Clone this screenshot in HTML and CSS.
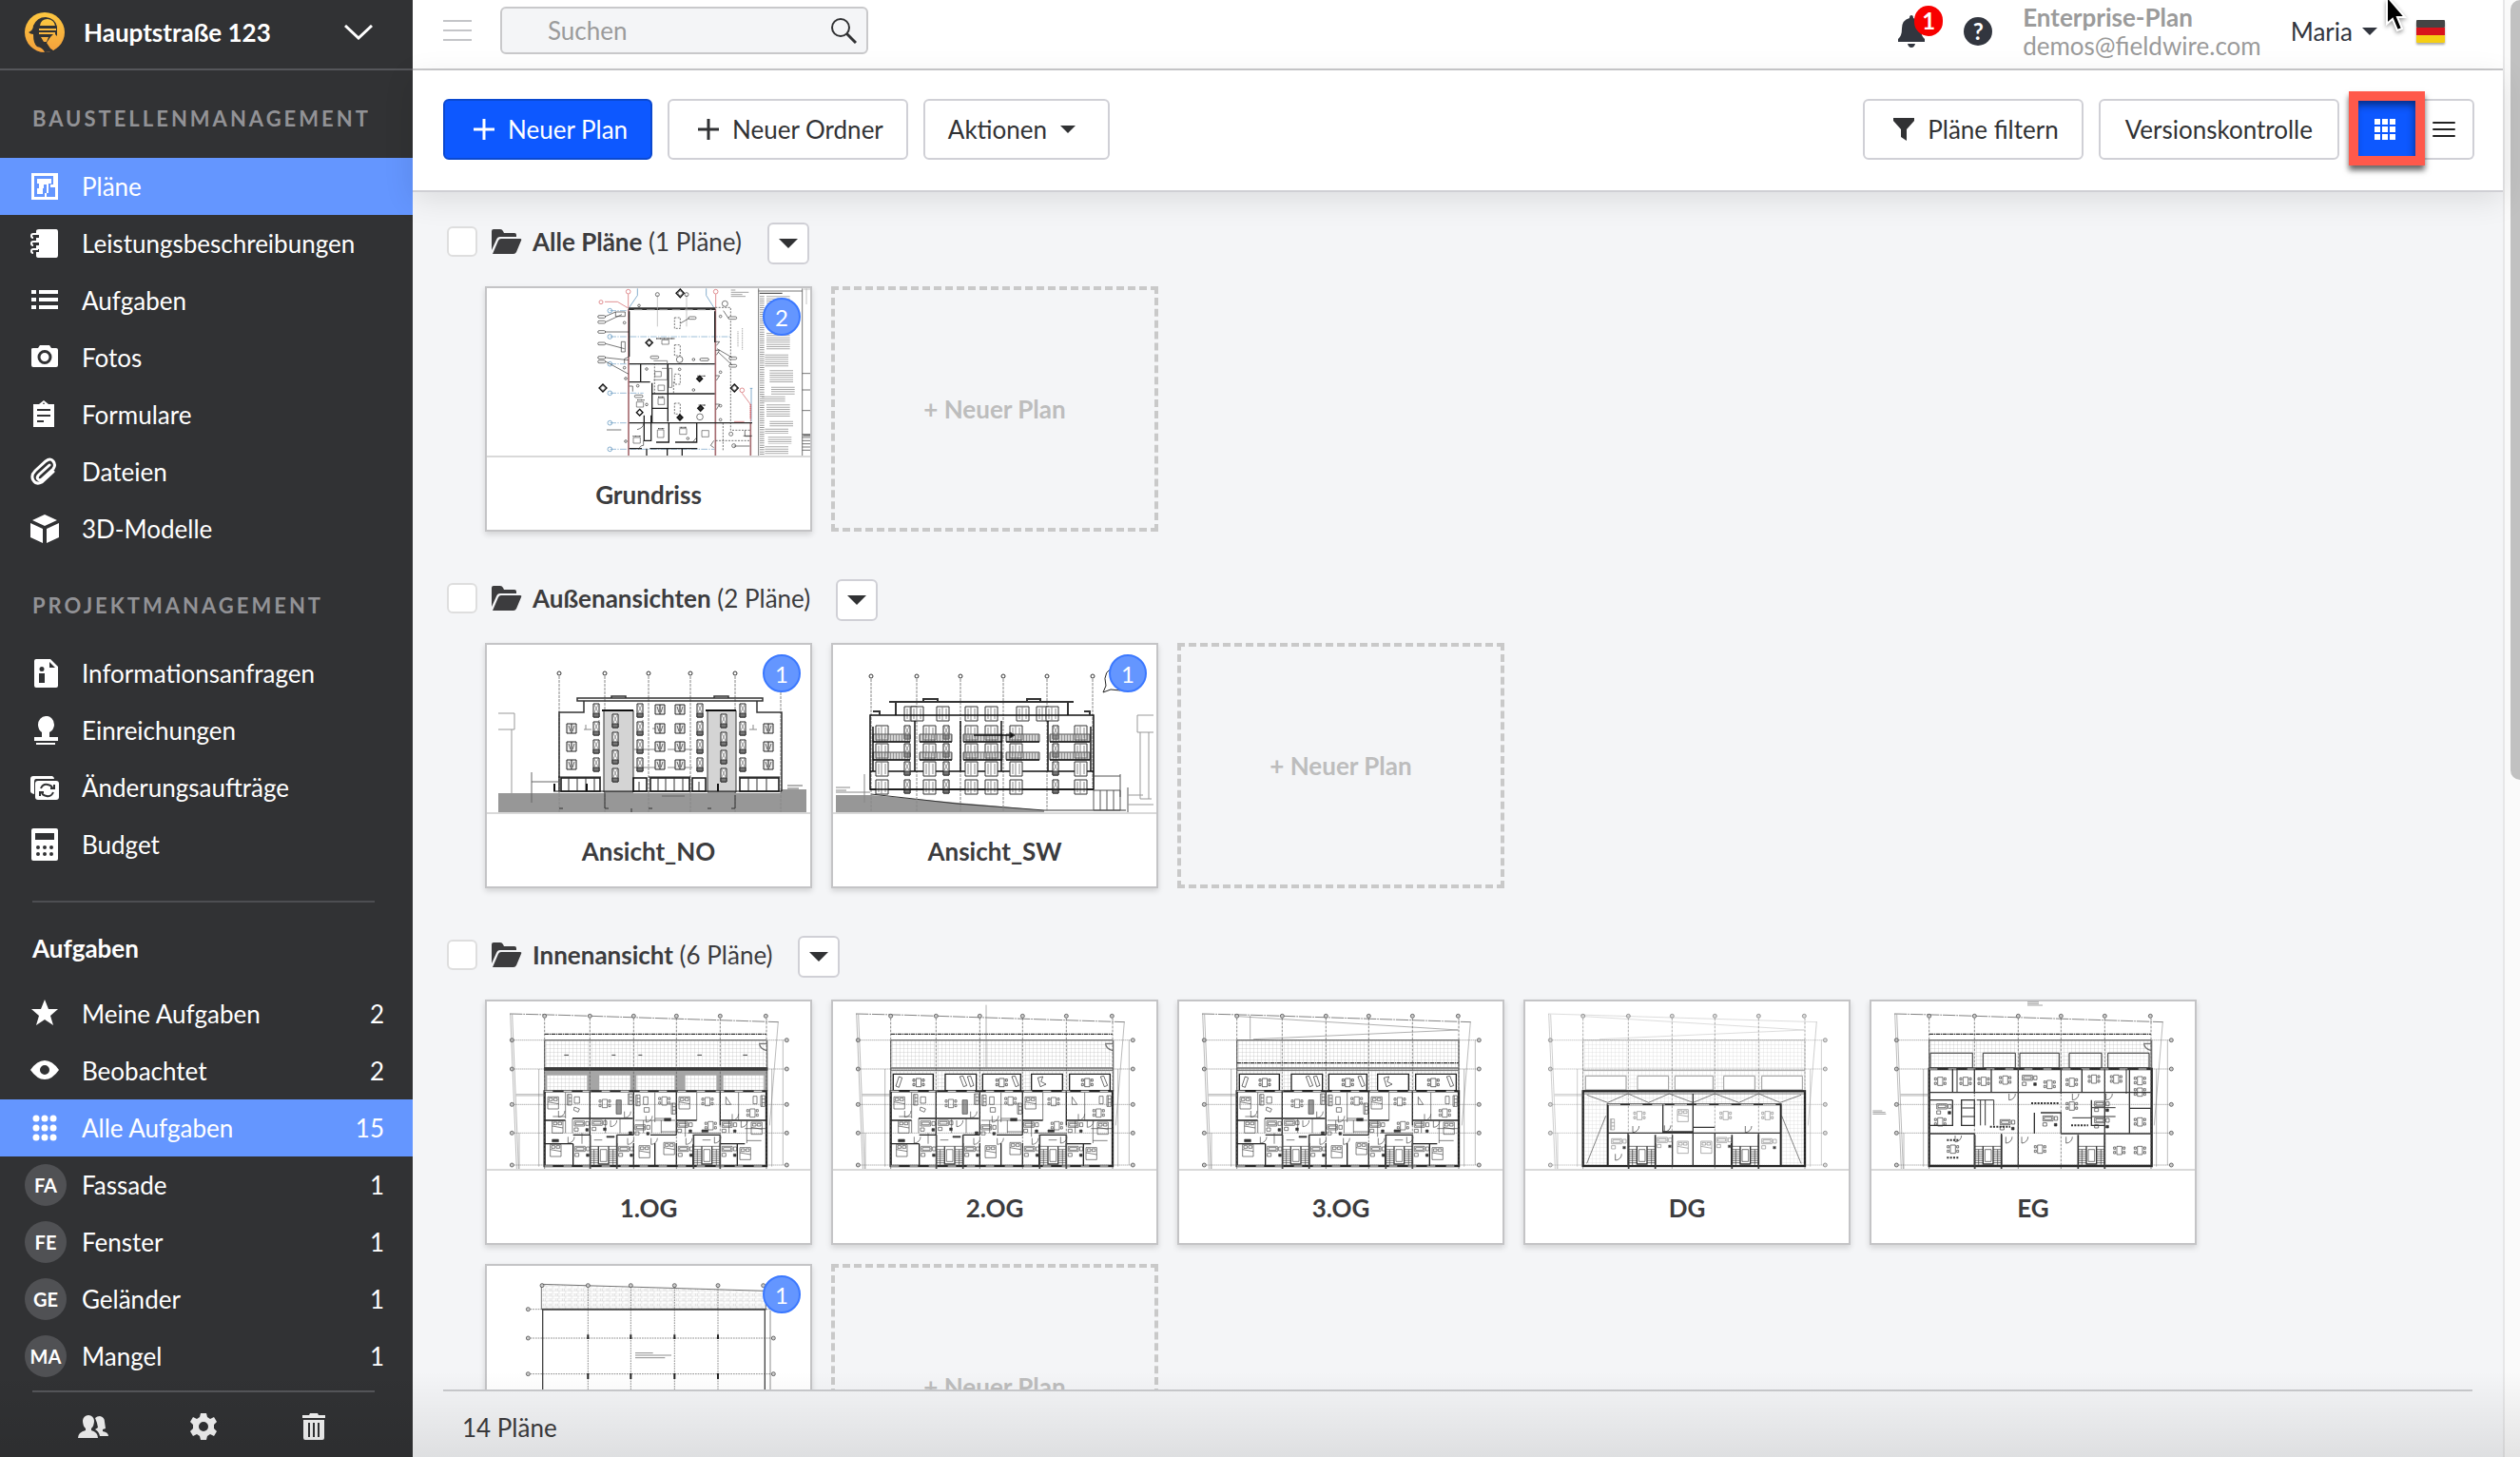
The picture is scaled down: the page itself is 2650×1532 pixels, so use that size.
FILE: index.html
```html
<!DOCTYPE html>
<html lang="de">
<head>
<meta charset="utf-8">
<title>Pläne – Hauptstraße 123</title>
<meta name="viewport" content="width=device-width, initial-scale=1">
<link rel="stylesheet" href="styles.css">
</head>
<body>
<svg class="defs" aria-hidden="true">
  <defs>
    <pattern id="tiles" width="12" height="12" patternUnits="userSpaceOnUse"><path d="M0 0H12M0 0V12" stroke="#aaa" stroke-width="1.5" fill="none"/></pattern>
    <pattern id="tilesLight" width="12" height="12" patternUnits="userSpaceOnUse"><path d="M0 0H12M0 0V12" stroke="#ccc" stroke-width="1.5" fill="none"/></pattern>
    <pattern id="bricks" width="20" height="16" patternUnits="userSpaceOnUse"><path d="M0 0H20M0 8H20M4 0V8M14 8V16M10 0V8" stroke="#bbb" stroke-width="1.2" fill="none"/></pattern>

    <!-- Caret and folder shared by the section headers -->
    <symbol id="caret" viewBox="0 0 20 10"><path d="M0 0H20L10 10Z"/></symbol>
    <symbol id="folder" viewBox="0 0 32 26"><path d="M0 2Q0 0 2 0H9Q11 0 12 2L13 4H24Q26 4 26 6V8H9Q6 8 5 11L0 22Z"/><path d="M7 12Q8 10 10 10H30Q32 10 31 12L26 24Q25 26 23 26H1Z"/></symbol>
    <symbol id="plus" viewBox="0 0 22 22"><path d="M11 0V22M0 11H22" stroke="currentColor" stroke-width="3"/></symbol>

    <!-- Furniture and building parts of the floor plans -->
    <g id="bed"><path d="M0 0H34V38H0ZM4 4H15V12H4ZM19 4H30V12H19ZM0 16L34 22"/></g>
    <g id="table"><path d="M10 6H26V32H10Z"/><path d="M0 8H6V15H0ZM0 22H6V29H0ZM30 8H36V15H30ZM30 22H36V29H30Z"/></g>
    <g id="sofa"><path d="M0 0H13V34H0ZM4 0V34M4 11H13M4 22H13"/></g>
    <g id="door"><path d="M0 0V20A20 20 0 0 0 20 0"/></g>
    <g id="stair">
      <path d="M0 0H84M0 10H26M0 17H26M0 24H26M0 31H26M0 38H26M0 45H26M0 52H26M58 10H84M58 17H84M58 24H84M58 31H84M58 38H84M58 45H84M58 52H84M12 10V60M72 10V60"/>
      <path d="M26 0V56H58V0" stroke-width="4"/><path d="M32 10H52V48H32Z"/>
      <path d="M0 -36V78M84 -36V78" stroke-width="5"/>
    </g>
    <g id="bath"><path d="M2 2H34V18H2ZM6 6H30V14H6ZM38 4H48V16H38ZM2 24H14V34H2Z"/><path d="M38 26H46V34H38Z" fill="#333"/></g>

    <g id="axes">
      <g stroke="#555" stroke-width="2" stroke-dasharray="8 4">
        <path d="M188 62V537M331 62V537M469 62V537M604 62V537M742 62V537M888 62V537"/>
        <path d="M92 131H945M92 222H945M92 334H945M92 424H945M92 525H945" stroke-dasharray="3 3"/>
      </g>
      <g stroke="#333" stroke-width="2" fill="#ccc">
        <circle cx="188" cy="55" r="6"/><circle cx="331" cy="55" r="6"/><circle cx="469" cy="55" r="6"/><circle cx="604" cy="55" r="6"/><circle cx="742" cy="55" r="6"/><circle cx="886" cy="55" r="6"/>
        <circle cx="85" cy="131" r="6"/><circle cx="85" cy="222" r="6"/><circle cx="85" cy="334" r="6"/><circle cx="85" cy="424" r="6"/><circle cx="85" cy="525" r="6"/>
        <circle cx="952" cy="131" r="6"/><circle cx="952" cy="222" r="6"/><circle cx="952" cy="334" r="6"/><circle cx="952" cy="424" r="6"/><circle cx="952" cy="525" r="6"/>
      </g>
      <path d="M80 48L100 537M86 50L106 537M98 302H188M98 306H188M108 424V537M925 73L898 400M940 131V525M905 222V530M170 222V530" fill="none" stroke="#777" stroke-width="1.5"/>
    </g>
    <path id="site" d="M78 48L240 52L926 74" fill="none" stroke="#444" stroke-width="2" stroke-dasharray="40 3 5 3"/>

    <!-- Residential storey below the terrace line -->
    <g id="flats" fill="none" stroke="#444" stroke-width="2">
      <path d="M188 292V528H888V292Z" stroke="#222" stroke-width="7"/>
      <path d="M188 292H888M188 528H888" stroke="#fff" stroke-width="3" stroke-dasharray="26 34"/>
      <path d="M331 292V378M469 292V430M604 292V430M742 292V400M331 378V430H278M416 430H469M522 430H604M656 430H742M278 458V528M188 458H278M188 384H254M276 378H466M416 456V528M469 456V528M536 456V528M604 456V528M656 460V528M742 456V528M796 458V528M742 458H820M742 384H888M604 384H668" stroke="#222" stroke-width="4"/>
      <path d="M254 296V378M254 384V424M276 378V424M380 378V424M426 378V424M500 384V424M536 296V390M526 384V424M556 384V424M668 296V384M632 384V436M800 296V384M826 384V456M770 384V424M306 424V458M820 410H888M474 384H600M556 420H604M640 424H742"/>
      <use href="#bed" x="198" y="310"/><use href="#bed" x="212" y="386"/><use href="#bed" x="206" y="460"/><use href="#bed" x="486" y="464"/><use href="#bed" x="564" y="454"/><use href="#bed" x="612" y="310"/><use href="#bed" x="804" y="470"/><use href="#bed" x="840" y="390"/>
      <use href="#table" x="360" y="312"/><use href="#table" x="548" y="304"/><use href="#table" x="684" y="306"/><use href="#table" x="826" y="342"/><use href="#table" x="694" y="382"/>
      <use href="#sofa" x="260" y="302"/><use href="#sofa" x="476" y="304"/><use href="#sofa" x="870" y="306"/><use href="#sofa" x="452" y="300"/><use href="#sofa" x="588" y="330"/>
      <use href="#bath" x="280" y="384"/><use href="#bath" x="336" y="382"/><use href="#bath" x="472" y="396"/><use href="#bath" x="606" y="388"/><use href="#bath" x="282" y="464"/><use href="#bath" x="420" y="464"/><use href="#bath" x="608" y="464"/><use href="#bath" x="746" y="464"/><use href="#bath" x="746" y="388"/>
      <use href="#door" x="232" y="354"/><use href="#door" x="262" y="436"/><use href="#door" x="440" y="356"/><use href="#door" x="508" y="370"/><use href="#door" x="396" y="384"/><use href="#door" x="450" y="440"/><use href="#door" x="524" y="440"/><use href="#door" x="634" y="440"/><use href="#door" x="780" y="364"/><use href="#door" x="808" y="386"/><use href="#door" x="724" y="436"/>
      <path d="M282 310H298V330H282ZM282 342L298 348L294 358L280 352ZM500 310H514V334H500ZM502 344H518V358H502ZM846 308H858V332H846ZM760 310L776 334H760ZM214 372H254M536 378H588M826 448H872M344 446H370M686 446H712"/>
      <path d="M414 320H430V364H414Z" fill="#999"/><path d="M566 378H586V386H566ZM212 444H232V452H212ZM684 414H704V421H684ZM454 420H464V430H454ZM384 434H408V438H384Z" fill="#333"/>
      <use href="#stair" x="332" y="466"/><use href="#stair" x="658" y="466"/>
    </g>
    <g id="lodges" fill="#fff" stroke="#222" stroke-width="4">
      <path d="M196 238H322V290H196ZM360 238H458V290H360ZM478 238H598V290H478ZM632 238H730V290H632ZM752 238H880V290H752Z"/>
      <g stroke-width="2"><path d="M214 246L224 250L214 280L204 276ZM406 246L416 244L428 274L418 278ZM430 246L440 244L450 274L440 278ZM570 246L580 244L592 274L582 278ZM850 246L860 244L872 274L862 278ZM652 250L668 246L662 262L678 270L660 278Z"/><use href="#table" x="258" y="246"/><use href="#table" x="520" y="246"/><use href="#table" x="790" y="246"/></g>
    </g>
    <g id="terrace"><rect x="188" y="131" width="700" height="88" fill="url(#tiles)"/><path d="M188 131H888M188 219H888M188 226H888M188 131V292M890 131V292M888 142H866Q866 158 888 164" fill="none" stroke="#777" stroke-width="4"/><path d="M188 112H888" stroke="#333" stroke-width="4" stroke-dasharray="14 2 3 2"/></g>

    <!-- Elevation windows, drawn from their top left corner -->
    <g id="win"><path d="M0 0H10V10H0ZM5 0V10" fill="#eee" stroke="#222"/><path d="M2 2L4 8M8 2L6 8" stroke="#666"/></g>
    <g id="slim"><path d="M0 0H6V14H0Z" fill="#fff" stroke="#222"/><path d="M1 1L5 9M5 1L1 9" stroke="#999"/><path d="M0 10H6V14H0Z" fill="#777"/></g>
    <g id="twin"><path d="M0 0H13V15H0Z" fill="#fff" stroke="#333"/><path d="M6 0V15M3 2V13M10 2V13" stroke="#888"/></g>
    <g id="swRow"><use href="#twin" x="45"/><use href="#twin" x="95"/><use href="#twin" x="139"/><use href="#twin" x="160"/><use href="#twin" x="186"/><use href="#twin" x="254"/><use href="#slim" x="75"/><use href="#slim" x="116"/><use href="#slim" x="231"/></g>
    <g id="noRow"><use href="#win" x="84" y="2"/><use href="#win" x="177" y="2"/><use href="#win" x="198" y="2"/><use href="#win" x="291" y="2"/><use href="#slim" x="112"/><use href="#slim" x="158"/><use href="#slim" x="221"/><use href="#slim" x="266"/></g>
    <g id="rail"><path d="M42 0H81V8H42ZM91 0H125V8H91ZM137 0H178V8H137ZM182 0H217V8H182ZM228 0H270V8H228Z" fill="#aaa" fill-opacity=".5" stroke="#555"/><path d="M42 4H81M91 4H125M137 4H178M182 4H217M228 4H270" stroke="#555" stroke-opacity=".5" stroke-dasharray="1 2" stroke-width="7"/></g>
  </defs>
</svg>

<div class="app">
  <aside class="sidebar">
    <button class="project" type="button">
      <svg class="logo" viewBox="0 0 42 42"><defs><linearGradient id="sun" x2="0" y2="1"><stop stop-color="#fdc740"/><stop offset="1" stop-color="#f4a13c"/></linearGradient></defs><circle cx="21" cy="21" r="21" fill="url(#sun)"/><path d="M4 21Q9 19 9 14Q13 5 22 5Q32 6 34 15V25L31 22L27 26L23 32L27 38L32 41L21 42Q19 37 13 36Q9 33 9 23Q6 23 4 21Z" fill="#313234"/><path d="M16 14Q17 7 24 7Q31 8 32 14ZM15 17H33V19H15ZM15 21H32V23H15ZM17 26H25L23 31H20ZM25 34L27 27L31 24V31L35 35L30 40Z" fill="url(#sun)"/></svg>
      <span class="project-name">Hauptstraße 123</span>
      <svg class="chevron" viewBox="0 0 30 16"><path d="M1 1L15 14L29 1" fill="none" stroke="#fff" stroke-width="3"/></svg>
    </button>

    <nav class="nav">
      <h2 class="nav-title">BAUSTELLENMANAGEMENT</h2>
      <a class="item active" href="#plaene"><svg class="icon" viewBox="0 0 30 30"><path fill-rule="evenodd" d="M1 1H29V29H1ZM4 4V26H15V22H17V26H26V16H21V13H24V4ZM7 7H22V12H19V22H17V13H14V17H13V23H7V17H9V12H7Z"/></svg><span>Pläne</span></a>
      <a class="item" href="#leistung"><svg class="icon" viewBox="0 0 30 30"><path d="M6 2Q6 0 9 0H27Q29 0 29 3V27Q29 30 27 30H9Q6 30 6 28V24H9V21H6V17H9V14H6V9H9V6H6Z"/><path d="M8 5H3Q1 5 1 7T3 9M8 13H3Q1 13 1 15T3 17M8 21H3Q1 21 1 23T3 25" fill="none" stroke="#fff" stroke-width="2"/></svg><span>Leistungsbeschreibungen</span></a>
      <a class="item" href="#aufgaben"><svg class="icon" viewBox="0 0 30 30"><path d="M1 4H6V8H1ZM9 4H29V8H9ZM1 12H6V16H1ZM9 12H29V16H9ZM1 20H6V24H1ZM9 20H29V24H9Z"/></svg><span>Aufgaben</span></a>
      <a class="item" href="#fotos"><svg class="icon" viewBox="0 0 30 30"><path fill-rule="evenodd" d="M1 6Q1 5 3 5H8L10 2H20L22 5H27Q29 5 29 7V23Q29 25 27 25H3Q1 25 1 23ZM15 7A7 7 0 1 0 15 22A7 7 0 1 0 15 7ZM15 10A4 4 0 1 1 15 19A4 4 0 1 1 15 10Z"/></svg><span>Fotos</span></a>
      <a class="item" href="#formulare"><svg class="icon" viewBox="0 0 30 30"><path fill-rule="evenodd" d="M3 4H9L14 0L19 4H25V28H3ZM7 9V11H21V9ZM7 15V17H21V15ZM7 21V23H14V21ZM14 2L13 4H15Z"/></svg><span>Formulare</span></a>
      <a class="item" href="#dateien"><svg class="icon" viewBox="0 0 30 30"><path d="M21 8L10 18Q7 21 9 23T14 22L25 12Q28 8 25 4T17 4L6 14Q1 19 4 24T13 26L25 15" transform="translate(-1 0)" fill="none" stroke="#fff" stroke-width="3" stroke-linecap="round"/></svg><span>Dateien</span></a>
      <a class="item" href="#modelle"><svg class="icon" viewBox="0 0 30 30"><path d="M15 0L28 6L15 12L2 6ZM0 9L13 15V30L0 24ZM30 9L17 15V30L30 24Z"/></svg><span>3D-Modelle</span></a>

      <h2 class="nav-title">PROJEKTMANAGEMENT</h2>
      <a class="item" href="#info"><svg class="icon" viewBox="0 0 30 30"><path fill-rule="evenodd" d="M6 0H21L29 8V28Q29 30 27 30H6Q4 30 4 28V2Q4 0 6 0ZM20 3V9H26ZM12 8A2 2 0 1 0 12 13A2 2 0 1 0 12 8ZM9 15V25H15V15Z"/></svg><span>Informationsanfragen</span></a>
      <a class="item" href="#einreichungen"><svg class="icon" viewBox="0 0 30 30"><path d="M16 0A8 9 0 0 0 8 9Q8 14 12 17V22H4V26H29V22H20V17Q25 14 25 9A8 9 0 0 0 16 0ZM6 28H26V30H6Z"/></svg><span>Einreichungen</span></a>
      <a class="item" href="#aenderungen"><svg class="icon" viewBox="0 0 30 30"><path d="M3 3H23Q25 4 25 6H6Q4 6 4 9V22Q0 21 0 19V6Q0 3 3 3Z"/><rect x="5" y="8" width="25" height="20" rx="3"/><path d="M11 16Q13 11 18 12T23 16M25 12V16H21M24 20Q22 25 17 24T12 20M10 24V20H14" fill="none" stroke="#313234" stroke-width="2"/></svg><span>Änderungsaufträge</span></a>
      <a class="item" href="#budget"><svg class="icon tall" viewBox="0 0 30 34"><path fill-rule="evenodd" d="M3 0H27Q29 0 29 2V32Q29 34 27 34H3Q1 34 1 32V2Q1 0 3 0ZM5 5V12H25V5Z"/><g fill="#313234"><circle cx="8" cy="20" r="2"/><circle cx="15" cy="20" r="2"/><circle cx="22" cy="20" r="2"/><circle cx="8" cy="27" r="2"/><circle cx="15" cy="27" r="2"/><circle cx="22" cy="27" r="2"/></g></svg><span>Budget</span></a>

      <hr class="rule">
      <h2 class="nav-group">Aufgaben</h2>
      <a class="item" href="#meine"><svg class="icon" viewBox="0 0 30 30"><path d="M15 0L19 10H29L21 17L24 27L15 21L6 27L9 17L1 10H11Z"/></svg><span>Meine Aufgaben</span><span class="count">2</span></a>
      <a class="item" href="#beobachtet"><svg class="icon" viewBox="0 0 30 30"><path fill-rule="evenodd" d="M0 14Q7 4 15 4T30 14Q23 24 15 24T0 14ZM15 9A5 5 0 1 0 15 19A5 5 0 1 0 15 9Z"/></svg><span>Beobachtet</span><span class="count">2</span></a>
      <a class="item active" href="#alle"><svg class="icon" viewBox="0 0 30 30"><circle cx="6" cy="5" r="3.5"/><circle cx="15" cy="5" r="3.5"/><circle cx="24" cy="5" r="3.5"/><circle cx="6" cy="15" r="3.5"/><circle cx="15" cy="15" r="3.5"/><circle cx="24" cy="15" r="3.5"/><circle cx="6" cy="25" r="3.5"/><circle cx="15" cy="25" r="3.5"/><circle cx="24" cy="25" r="3.5"/></svg><span>Alle Aufgaben</span><span class="count">15</span></a>
      <a class="item" href="#fassade"><span class="avatar">FA</span><span>Fassade</span><span class="count">1</span></a>
      <a class="item" href="#fenster"><span class="avatar">FE</span><span>Fenster</span><span class="count">1</span></a>
      <a class="item" href="#gelaender"><span class="avatar">GE</span><span>Geländer</span><span class="count">1</span></a>
      <a class="item" href="#mangel"><span class="avatar">MA</span><span>Mangel</span><span class="count">1</span></a>
    </nav>

    <div class="side-foot">
      <button type="button" aria-label="Personen"><svg viewBox="0 0 32 30"><path d="M11 3A6 6 0 0 1 17 9Q17 14 14 17V19Q21 21 21 27H0Q0 21 8 19V17Q5 14 5 9A6 6 0 0 1 11 3ZM18 6Q20 4 23 4Q28 5 28 10L29 17L26 18V20Q32 21 32 25H23Q22 20 18 18L21 16Q20 10 18 6Z"/></svg></button>
      <button type="button" aria-label="Einstellungen"><svg viewBox="0 0 30 30"><path fill-rule="evenodd" d="M12 1H18L19 5L22 7L26 5L29 10L26 13V17L29 20L26 25L22 23L19 25L18 29H12L11 25L8 23L4 25L1 20L4 17V13L1 10L4 5L8 7L11 5ZM15 10A5 5 0 1 0 15 20A5 5 0 1 0 15 10Z"/></svg></button>
      <button type="button" aria-label="Papierkorb"><svg viewBox="0 0 30 30"><path fill-rule="evenodd" d="M3 3H10L11 1H19L20 3H27V6H3ZM4 8H26V27Q26 29 24 29H6Q4 29 4 27ZM9 11V26H11V11ZM14 11V26H16V11ZM19 11V26H21V11Z"/></svg></button>
    </div>
  </aside>

  <main class="main">
    <header class="topbar">
      <button class="burger" type="button" aria-label="Menü"><svg viewBox="0 0 30 22"><path d="M0 1H30M0 11H30M0 21H30" stroke="#c4c5c8" stroke-width="2"/></svg></button>
      <label class="search">
        <input type="search" placeholder="Suchen" aria-label="Suchen">
        <svg viewBox="0 0 28 28"><circle cx="11" cy="11" r="9" fill="none" stroke="#313234" stroke-width="2"/><path d="M17 17L27 27" stroke="#313234" stroke-width="3"/></svg>
      </label>
      <div class="account">
        <button class="bell" type="button" aria-label="Mitteilungen"><svg viewBox="0 0 30 34"><path d="M15 0Q17 0 17 3Q25 5 25 14Q25 22 29 25V28H1V25Q5 22 5 14Q5 5 13 3Q13 0 15 0ZM11 30H19Q18 34 15 34T11 30Z"/></svg><span class="alert">1</span></button>
        <button class="help" type="button" aria-label="Hilfe">?</button>
        <div class="plan"><strong>Enterprise-Plan</strong><span>demos@fieldwire.com</span></div>
        <button class="user" type="button">Maria <svg viewBox="0 0 20 10"><path d="M0 0H20L10 10Z"/></svg></button>
        <svg class="flag" viewBox="0 0 30 24"><rect width="30" height="8" rx="1" fill="#444"/><rect y="8" width="30" height="8" fill="#d8141c"/><rect y="16" width="30" height="8" rx="1" fill="#f5ce14"/></svg>
      </div>
    </header>

    <div class="toolbar">
      <button class="btn primary" type="button"><svg><use href="#plus"/></svg>Neuer Plan</button>
      <button class="btn" type="button"><svg><use href="#plus"/></svg>Neuer Ordner</button>
      <button class="btn menu" type="button">Aktionen<svg><use href="#caret"/></svg></button>
      <div class="tools">
        <button class="btn filter" type="button"><svg viewBox="0 0 22 24"><path d="M0 0H22V3L14 12V24L8 20V12L0 3Z"/></svg>Pläne filtern</button>
        <button class="btn versions" type="button">Versionskontrolle</button>
        <div class="toggle">
          <button class="grid-view" type="button" aria-label="Kacheln"><svg viewBox="0 0 22 22"><path d="M0 0H6V6H0ZM8 0H14V6H8ZM16 0H22V6H16ZM0 8H6V14H0ZM8 8H14V14H8ZM16 8H22V14H16ZM0 16H6V22H0ZM8 16H14V22H8ZM16 16H22V22H16Z"/></svg></button>
          <button class="list-view" type="button" aria-label="Liste"><svg viewBox="0 0 24 16"><path d="M1 1H23M1 8H23M1 15H23" stroke="#222" stroke-width="2" stroke-linecap="round"/></svg></button>
          <span class="marker"></span>
        </div>
      </div>
    </div>

    <div class="content">
      <section class="folder">
        <div class="folder-head">
          <input type="checkbox" id="f1"><svg class="folder-icon"><use href="#folder"/></svg>
          <label for="f1"><strong>Alle Pläne</strong> (1 Pläne)</label>
          <button class="drop" type="button" aria-label="Optionen"><svg><use href="#caret"/></svg></button>
        </div>
        <div class="cards">
          <a class="card" href="#grundriss">
            <svg class="thumb" viewBox="6 9 1020 528" fill="none" stroke="#333" stroke-width="2">
              <path d="M394 80H455M394 162H775M394 248H725M394 340H500M394 434H450M394 517H725" stroke="#6b9dc4" stroke-dasharray="20 4 4 4"/>
              <g stroke="#4a87b5"><circle cx="394" cy="80" r="7"/><circle cx="394" cy="162" r="7"/><circle cx="394" cy="248" r="7"/><circle cx="394" cy="340" r="7"/><circle cx="394" cy="434" r="7"/><circle cx="394" cy="517" r="7"/><path d="M481 10V32L455 70M698 10V32L722 70M836 325H844M840 325V430"/></g>
              <g stroke="#d0575c"><circle cx="452" cy="20" r="7"/><circle cx="728" cy="20" r="7"/><circle cx="366" cy="53" r="6"/><circle cx="811" cy="331" r="7"/><path d="M452 28V70M728 28V70M378 52H418L452 72M811 340L838 376V430M786 430H818"/><path d="M838 376V420" stroke-width="5" stroke-dasharray="3 3"/></g>
              <path d="M453 74V537M727 74V537M838 432V537" stroke="#a86e73" stroke-width="5"/>
              <path d="M453 74H727" stroke="#333" stroke-width="8"/><path d="M470 77H715" stroke="#999" stroke-width="3" stroke-dasharray="26 14"/>
              <path d="M455 82V225M725 82V180M455 248H725M491 248V305M455 305H521M577 248V430M527 308V434M527 342H725M527 388H577M455 434H843M502 410V490H524V410M580 434V495H540M668 434V495H600M455 515H495M520 515H670M510 515V537M575 515V537M622 515V537" stroke="#222" stroke-width="4"/>
              <path d="M544 30V130M636 30V130" stroke="#aaa"/><circle cx="544" cy="29" r="6"/><circle cx="636" cy="29" r="6"/>
              <path d="M598 102H616V136H598ZM598 188H616V222H598ZM598 280H616V312H598ZM598 372H616V406H598ZM727 70H775V457H838M535 342V250M595 340V300M751 434V520M728 490H838" stroke-dasharray="6 4"/>
              <path d="M532 238H575V298H532M558 262H590V322H580V262M558 172H580V186H558ZM536 272H556V288H536ZM546 315H566V332H546ZM546 356H566V376H546ZM478 368H500V384H478ZM544 456H564V480H544ZM614 452H636V470H614ZM684 458H706V478H684ZM468 480H490V498H468Z" stroke="#555"/>
              <path d="M540 168H598M480 362H504M546 352H566M670 286H696M674 378H696M546 452H566M614 448H636M466 476H492" stroke="#555" stroke-width="4" stroke-dasharray="3 1"/>
              <g fill="#fff"><rect x="356" y="95" width="24" height="8" rx="4"/><rect x="356" y="112" width="24" height="8" rx="4"/><rect x="356" y="143" width="24" height="8" rx="4"/><rect x="356" y="180" width="24" height="8" rx="4"/><rect x="356" y="224" width="24" height="8" rx="4"/><rect x="356" y="237" width="24" height="8" rx="4"/><rect x="642" y="99" width="24" height="8" rx="4"/><rect x="768" y="99" width="26" height="8" rx="4"/><rect x="522" y="223" width="26" height="8" rx="4"/><rect x="678" y="230" width="28" height="8" rx="4"/><rect x="770" y="226" width="24" height="8" rx="4"/><rect x="770" y="250" width="24" height="8" rx="4"/><rect x="472" y="346" width="26" height="8" rx="4"/></g>
              <path d="M380 98L412 84H442V98H412V84M380 116L432 92M380 147H453M380 184L440 200M380 228L453 236M380 240L453 280M430 178H442V210H430ZM616 120L644 104M768 104L752 80M732 200L780 228M735 210L780 252M384 456H430"/>
              <g stroke="#111" stroke-width="4"><path d="M616 12L628 25L616 38L603 25ZM518 170L529 181L518 192L507 181ZM372 312L384 324L372 336L360 324ZM787 312L799 324L787 336L775 324ZM488 391L498 401L488 411L478 401Z"/><path d="M615 408L624 417L615 426L606 417ZM677 286L686 295L677 304L668 295ZM680 379L689 388L680 397L671 388Z" fill="#333"/></g>
              <g fill="#fff"><circle cx="616" cy="25" r="7"/><circle cx="518" cy="181" r="6"/><circle cx="372" cy="324" r="7"/><circle cx="787" cy="324" r="7"/><circle cx="757" cy="58" r="9"/><circle cx="614" cy="234" r="10"/><circle cx="678" cy="415" r="10"/><circle cx="785" cy="506" r="6"/><circle cx="776" cy="469" r="6"/><circle cx="658" cy="234" r="4"/><circle cx="743" cy="98" r="4"/><circle cx="743" cy="274" r="4"/><circle cx="743" cy="380" r="4"/><circle cx="743" cy="424" r="4"/><circle cx="486" cy="64" r="4"/><circle cx="440" cy="118" r="4"/><circle cx="440" cy="260" r="4"/><circle cx="444" cy="294" r="4"/><circle cx="510" cy="264" r="4"/><circle cx="614" cy="265" r="4"/><circle cx="658" cy="330" r="4"/><circle cx="482" cy="317" r="4"/><circle cx="510" cy="376" r="4"/><circle cx="444" cy="492" r="4"/><circle cx="640" cy="483" r="4"/></g>
              <path d="M727 178H740L730 190M727 205H740L730 220M727 285H740L730 300M727 375H740L730 392M455 225L440 232V246M455 318H466V335M480 455Q500 450 500 436M500 490V505Q488 505 486 518M655 495L668 480M722 490L712 505L722 512"/>
              <path d="M776 15H790M776 22H832M776 29H812M776 35H822" stroke="#777"/>
              <path d="M798 145V195M812 135V205" stroke="#777" stroke-dasharray="3 2"/>
              <path d="M863 10V537M1001 10V537M863 18H1001M815 475H843M820 457V476H838M785 507H835"/>
              <path d="M866 25H938" stroke-width="3"/>
              <path d="M874 34V536" stroke="#999" stroke-width="14" stroke-dasharray="3 4"/>
              <path d="M925 34V120M925 150V205M920 218V258M935 268V310M940 320V348M910 350V368M925 376V415M935 428V445M920 452V468M930 478V500M920 508V534" stroke="#aaa" stroke-width="74" stroke-dasharray="3 4"/>
              <path d="M1001 278H1026M1001 330H1026M1001 395H1026M1001 470H1026M1001 480H1026M1001 490H1026M1001 500H1026M1001 510H1026M1001 520H1026"/>
              <path d="M1003 473H1026" stroke="#777" stroke-width="6"/><path d="M1004 12H1026M1014 10V60" stroke="#aaa"/>
            </svg>
            <span class="badge">2</span><span class="name">Grundriss</span>
          </a>
          <button class="card-new" type="button">+ Neuer Plan</button>
        </div>
      </section>

      <section class="folder">
        <div class="folder-head">
          <input type="checkbox" id="f2"><svg class="folder-icon"><use href="#folder"/></svg>
          <label for="f2"><strong>Außenansichten</strong> (2 Pläne)</label>
          <button class="drop" type="button" aria-label="Optionen"><svg><use href="#caret"/></svg></button>
        </div>
        <div class="cards">
          <a class="card" href="#no">
            <svg class="thumb" viewBox="0 0 340 176" fill="none" stroke="#333">
              <path d="M12 156H309V152H336V176H12Z" fill="#979797" stroke="none"/>
              <path d="M76 33V176M124 33V176M170 33V176M214 33V176M261 33V176M309 50V176" stroke="#888" stroke-dasharray="3 1"/>
              <g fill="#fff"><circle cx="76" cy="30" r="2"/><circle cx="124" cy="30" r="2"/><circle cx="170" cy="30" r="2"/><circle cx="214" cy="30" r="2"/><circle cx="261" cy="30" r="2"/></g>
              <path d="M12 72H29V89H12M26 89V157" stroke="#999"/>
              <path d="M95 56H290V59H95ZM131 56V54H146V56M239 56V54H254V56M102 59V71H76V154M284 59V71H310V154" stroke-width="1.5"/>
              <path d="M123 69H154V155H123ZM232 69H262V155H232Z" fill="#d4d4d4"/><path d="M121 69H154M230 69H262" stroke="#111" stroke-width="2"/>
              <path d="M118 79V84M164 79V86M226 79V86M104 84V89M178 83V88M280 84V89M102 89H110M174 88H182M276 89H284M154 110H180M190 110H216M154 129H180M190 129H216" stroke="#888"/>
              <use href="#slim" x="112" y="62"/><use href="#slim" x="158" y="62"/><use href="#slim" x="221" y="62"/><use href="#slim" x="266" y="62"/><use href="#win" x="177" y="63"/><use href="#win" x="198" y="63"/>
              <use href="#noRow" y="81"/><use href="#noRow" y="100"/><use href="#noRow" y="119"/>
              <use href="#slim" x="132" y="73"/><use href="#slim" x="132" y="92"/><use href="#slim" x="132" y="111"/><use href="#slim" x="132" y="130"/><use href="#slim" x="246" y="73"/><use href="#slim" x="246" y="92"/><use href="#slim" x="246" y="111"/><use href="#slim" x="246" y="130"/>
              <path d="M78 140H119V154H78ZM172 140H213V154H172ZM266 140H307V154H266ZM154 140H168V154H154ZM216 140H230V154H216Z" stroke="#111" stroke-width="1.5"/>
              <path d="M86 140V154M95 140V154M104 140V154M113 140V154M180 140V154M188 140V154M197 140V154M206 140V154M275 140V154M284 140V154M294 140V154M160 144V154M223 144V154"/>
              <path d="M75 139H120M170 139H214M265 139H308" stroke="#111"/><path d="M70 154H310" stroke="#111"/>
              <path d="M71 146V154M105 146V154M243 146V154" stroke="#111" stroke-width="2"/><path d="M47 134V166M47 144H75M184 159H208M316 148H332M316 151H328" stroke="#666"/>
              <path d="M124 156V172H128M152 172V176M232 172H236M261 158V172H257M170 172H174M76 172H80" stroke="#333"/>
            </svg>
            <span class="badge">1</span><span class="name">Ansicht_NO</span>
          </a>
          <a class="card" href="#sw">
            <svg class="thumb" viewBox="0 0 340 176" fill="none" stroke="#333">
              <path d="M3 158H40L222 174V176H3Z" fill="#979797" stroke="none"/><path d="M40 157L130 167L222 174M222 174H308"/>
              <path d="M40 36V176M88 36V176M134 36V176M179 36V176M225 36V176M273 36V150" stroke="#888" stroke-dasharray="3 1"/>
              <g fill="#fff"><circle cx="40" cy="33" r="2"/><circle cx="88" cy="33" r="2"/><circle cx="134" cy="33" r="2"/><circle cx="179" cy="33" r="2"/><circle cx="225" cy="33" r="2"/><circle cx="273" cy="33" r="2"/></g>
              <path d="M59 60H253M66 61V74M247 61V74M95 59V57H110V59M204 59V57H218V59" stroke-width="2"/>
              <use href="#twin" x="75" y="65"/><use href="#twin" x="82" y="65"/><use href="#twin" x="109" y="65"/><use href="#twin" x="139" y="65"/><use href="#twin" x="160" y="65"/><use href="#twin" x="193" y="65"/><use href="#twin" x="214" y="65"/><use href="#twin" x="224" y="65"/>
              <path d="M39 74H274V152H39ZM39 133H274" stroke="#111" stroke-width="1.5"/>
              <use href="#swRow" y="85"/><use href="#swRow" y="104"/><use href="#swRow" y="123"/><use href="#swRow" y="142"/>
              <use href="#rail" y="94"/><use href="#rail" y="113"/>
              <path d="M42 102H81M91 102H125M137 102H178M182 102H217M228 102H270M42 121H81M91 121H125M137 121H178M182 121H217M228 121H270M42 86V133M86 80V133M134 80V133M177 80V133M226 80V133M271 86V133" stroke="#111" stroke-width="1.5"/>
              <path d="M39 152H274" stroke="#111" stroke-width="1.5"/>
              <path d="M148 95H188" stroke="#111" stroke-width="1.5"/><path d="M186 92L191 95L186 98Z" fill="#111"/>
              <path d="M42 70H49V74M264 70H270V74" stroke-width="2"/>
              <path d="M274 153H302V174H274ZM281 153V174M288 153V174M295 153V174M310 150V176M302 136V160M274 138H302" stroke="#555"/><path d="M337 74H320V92H337M323 92V162H335M332 92V162M310 158H326M310 168H337" stroke="#999"/>
              <path d="M33 136V166M3 150H18M3 153H14M3 155H39" stroke="#888"/>
              <path d="M300 22Q282 26 287 43L284 50L292 47L302 48Z" fill="#fff" stroke="#222"/>
            </svg>
            <span class="badge">1</span><span class="name">Ansicht_SW</span>
          </a>
          <button class="card-new" type="button">+ Neuer Plan</button>
        </div>
      </section>

      <section class="folder">
        <div class="folder-head">
          <input type="checkbox" id="f3"><svg class="folder-icon"><use href="#folder"/></svg>
          <label for="f3"><strong>Innenansicht</strong> (6 Pläne)</label>
          <button class="drop" type="button" aria-label="Optionen"><svg><use href="#caret"/></svg></button>
        </div>
        <div class="cards">
          <a class="card" href="#og1">
            <svg class="thumb" viewBox="6 9 1020 528"><use href="#site"/><use href="#terrace"/><path d="M188 226H888V292H188Z" fill="#a5a5a5"/><path d="M196 242H322V290H196ZM360 242H458V290H360ZM478 242H598V290H478ZM632 242H730V290H632ZM752 242H880V290H752Z" fill="#fff"/><path d="M196 242H322V290H196ZM360 242H458V290H360ZM478 242H598V290H478ZM632 242H730V290H632ZM752 242H880V290H752Z" fill="url(#tiles)"/><path d="M186 222H892" stroke="#333" stroke-width="10"/><path d="M250 178H264M400 178H412M484 178H496M670 178H684M814 178H828" stroke="#444" stroke-width="3"/><use href="#flats"/><use href="#axes"/></svg>
            <span class="name">1.OG</span>
          </a>
          <a class="card" href="#og2">
            <svg class="thumb" viewBox="6 9 1020 528"><use href="#site"/><use href="#terrace"/><path d="M188 226H888V292H188Z" fill="url(#tiles)"/><use href="#lodges"/><path d="M489 20V220" stroke="#888" stroke-width="2"/><use href="#flats"/><use href="#axes"/></svg>
            <span class="name">2.OG</span>
          </a>
          <a class="card" href="#og3">
            <svg class="thumb" viewBox="6 9 1020 528"><use href="#site"/><path d="M190 56L886 99L240 128M230 54V128" fill="none" stroke="#888" stroke-width="2"/><rect x="188" y="131" width="700" height="160" fill="url(#tiles)"/><path d="M188 131H888V292M188 131V292M188 226H888M188 219H888" fill="none" stroke="#777" stroke-width="4"/><path d="M188 203H888" stroke="#333" stroke-width="4" stroke-dasharray="14 2 3 2"/><use href="#lodges"/><use href="#flats"/><use href="#axes"/></svg>
            <span class="name">3.OG</span>
          </a>
          <a class="card" href="#dg">
            <svg class="thumb" viewBox="6 9 1020 528" fill="none" stroke="#333" stroke-width="2">
              <path d="M78 48L926 74M190 56L886 99L240 128" stroke="#ccc"/>
              <rect x="188" y="131" width="700" height="160" fill="url(#tilesLight)" stroke="#bbb"/>
              <path d="M188 226H888" stroke="#aaa" stroke-width="4"/>
              <path d="M196 244H324V288H196ZM360 244H458V288H360ZM478 244H598V288H478ZM632 244H730V288H632ZM752 244H880V288H752Z" fill="#fff" stroke="#999" stroke-width="3"/>
              <rect x="188" y="292" width="700" height="236" fill="url(#tilesLight)" stroke="#222" stroke-width="7"/>
              <path d="M190 300H886M200 304L266 328L330 300L395 328L460 300L535 328L604 300L680 328L742 300L810 328L876 304M200 520L260 370M876 520L815 370" stroke="#444"/>
              <path d="M266 334H812V528H266Z" fill="#fff" stroke="#222" stroke-width="6"/><path d="M266 334H812" stroke="#fff" stroke-width="3" stroke-dasharray="40 30"/>
              <path d="M440 334V420H535M535 300V528M266 424H812M330 424V528M416 456V528M470 430V528M604 424V528M656 456V528M742 424V528M535 406H604" stroke-width="4"/>
              <g stroke="#888"><use href="#table" x="348" y="350"/><use href="#bed" x="486" y="350"/><use href="#bed" x="486" y="450"/><use href="#table" x="620" y="350"/><use href="#table" x="752" y="350"/><use href="#bed" x="560" y="450"/><use href="#sofa" x="274" y="380"/><use href="#bath" x="276" y="440"/><use href="#bath" x="750" y="440"/><use href="#bath" x="608" y="436"/><use href="#bath" x="420" y="436"/></g>
              <use href="#door" x="345" y="402"/><use href="#door" x="445" y="400"/><use href="#door" x="700" y="402"/><use href="#door" x="290" y="490"/>
              <use href="#stair" x="332" y="466"/><use href="#stair" x="658" y="466"/>
              <use href="#axes" stroke="none" opacity=".7"/>
            </svg>
            <span class="name">DG</span>
          </a>
          <a class="card" href="#eg">
            <svg class="thumb" viewBox="6 9 1020 528" fill="none" stroke="#333" stroke-width="2">
              <use href="#site"/><path d="M498 11H534M498 16H534M498 21H546M10 354H40M10 359H50M10 364H52" stroke="#777"/>
              <use href="#terrace"/>
              <path d="M192 172H325V218H192ZM358 172H460V218H358ZM474 172H598V218H474ZM630 172H732V218H630ZM752 172H882V218H752Z" fill="#fff"/><path d="M192 172H325V218H192ZM358 172H460V218H358ZM474 172H598V218H474ZM630 172H732V218H630ZM752 172H882V218H752Z" fill="url(#tilesLight)"/>
              <path d="M188 222H890V528H188Z" fill="#fff" stroke="#222" stroke-width="7"/>
              <path d="M188 222H888" stroke="#fff" stroke-width="3" stroke-dasharray="26 34"/>
              <path d="M331 222V300M331 426H188M469 222V528M604 222V300M742 222V528M331 426V528M416 426V528M604 426H888M188 320H262M262 222V296M384 222V296M262 320V400H188M290 320V400H331V320ZM700 320V400H742M520 360V426M540 360H604V426M670 222V296H742M820 222V346H888V425M820 346V425M190 296H888" stroke-width="4"/>
              <path d="M700 344H776M700 372H776M292 345H330M292 372H330M810 222V300M276 222V296M338 320H392V400M350 320V400M365 320V400M640 376H700" stroke-width="3"/>
              <use href="#table" x="205" y="242"/><use href="#table" x="285" y="242"/><use href="#table" x="342" y="242"/><use href="#table" x="410" y="238"/><use href="#table" x="550" y="252"/><use href="#table" x="620" y="245"/><use href="#table" x="690" y="235"/><use href="#table" x="760" y="235"/><use href="#table" x="835" y="240"/><use href="#table" x="835" y="276"/><use href="#table" x="835" y="370"/><use href="#table" x="620" y="320"/><use href="#table" x="205" y="370"/><use href="#table" x="245" y="456"/><use href="#table" x="520" y="456"/><use href="#table" x="770" y="460"/><use href="#table" x="835" y="460"/>
              <use href="#bath" x="410" y="380"/><use href="#bath" x="210" y="330"/><use href="#bath" x="480" y="240"/><use href="#bath" x="545" y="368"/><use href="#bath" x="708" y="322"/><use href="#bath" x="708" y="374"/>
              <path d="M244 446H284M244 502H284M380 404H444M636 400H690M510 330H600" stroke-dasharray="6 4" stroke-width="6"/>
              <use href="#door" x="270" y="432"/><use href="#door" x="430" y="436"/><use href="#door" x="620" y="436"/><use href="#door" x="746" y="300"/><use href="#door" x="440" y="300"/><use href="#door" x="640" y="300"/><use href="#door" x="480" y="436"/>
              <use href="#stair" x="332" y="466"/><use href="#stair" x="658" y="466"/>
              <use href="#axes"/>
            </svg>
            <span class="name">EG</span>
          </a>
          <a class="card" href="#ug">
            <svg class="thumb" viewBox="6 9 1020 528" fill="none" stroke="#333" stroke-width="2">
              <path d="M178 67L886 88V146H178Z" fill="url(#bricks)"/>
              <path d="M180 146H886" stroke="#444" stroke-width="6"/><path d="M182 146V537M883 146V537" stroke="#444" stroke-width="4"/>
              <path d="M325 75V537M460 75V537M598 75V537M735 75V537M135 237H905M135 350H905M135 146H905" stroke="#555" stroke-dasharray="5 3"/>
              <path d="M325 226V240M460 226V240M598 226V240M735 226V240M325 348V366M460 348V366M598 348V366M735 348V366" stroke="#222" stroke-width="6"/>
              <g fill="#ccc"><circle cx="180" cy="71" r="6"/><circle cx="325" cy="71" r="6"/><circle cx="460" cy="71" r="6"/><circle cx="598" cy="71" r="6"/><circle cx="735" cy="71" r="6"/><circle cx="878" cy="71" r="6"/><circle cx="136" cy="146" r="6"/><circle cx="136" cy="237" r="6"/><circle cx="136" cy="350" r="6"/><circle cx="910" cy="237" r="6"/><circle cx="910" cy="350" r="6"/></g>
              <path d="M474 284H530M474 291H588M474 299H568M900 150V537" stroke="#555"/>
            </svg>
            <span class="badge">1</span><span class="name">UG</span>
          </a>
          <button class="card-new" type="button">+ Neuer Plan</button>
        </div>
      </section>
    </div>

    <footer class="status">14 Pläne</footer>
  </main>

  <div class="scrolltrack"><div class="scrollthumb"></div></div>
</div>
<div class="shade"></div>
<svg class="pointer" viewBox="0 0 24 34"><path d="M2 -4V25L8 20L13 32L18 30L13 18H21Z" fill="#000" stroke="#fff" stroke-width="2"/></svg>
</body>
</html>
```
FILE: styles.css
```css
* { box-sizing: border-box; }

body {
  margin: 0;
  font: 26px/32px Lato, "Liberation Sans", sans-serif;
  color: #3c3c3e;
  background: #f4f5f7;
  overflow: hidden;
}

button {
  font: inherit;
  color: inherit;
  background: none;
  border: 0;
  padding: 0;
}

a { color: inherit; text-decoration: none; }
h2 { margin: 0; }
svg { display: block; flex: none; }

.defs { position: absolute; width: 0; height: 0; }

.app { display: flex; height: 100vh; }

/* Sidebar */
.sidebar {
  flex: none;
  width: 434px;
  display: flex;
  flex-direction: column;
  background: #313234;
  color: #fff;
}

.project {
  flex: none;
  display: flex;
  align-items: center;
  height: 74px;
  padding: 0 42px 4px 26px;
  border-bottom: 2px solid #55565a;
  text-align: left;
}
.logo { width: 42px; height: 42px; }
.project-name { flex: 1; margin-left: 20px; font-weight: 700; }
.chevron { width: 30px; height: 16px; }

.nav { flex: 1; min-height: 0; overflow: hidden; }
.nav-title {
  height: 92px;
  padding: 35px 0 0 34px;
  font-size: 22px;
  font-weight: 700;
  letter-spacing: 3px;
  color: #929296;
}

.item {
  display: flex;
  align-items: center;
  height: 60px;
  padding: 0 30px 0 26px;
}
.item.active { background: #6496ff; }
.icon { width: 30px; height: 30px; margin: 0 24px 0 6px; fill: #fff; }
.icon.tall { height: 34px; }
.avatar {
  flex: none;
  width: 44px;
  height: 44px;
  margin-right: 16px;
  border-radius: 50%;
  background: #505154;
  font-size: 20px;
  font-weight: 700;
  line-height: 44px;
  text-align: center;
}
.count { margin-left: auto; }

.rule { margin: 29px 40px 0 34px; border: 0; border-top: 2px solid #4d4e52; }
.nav-group {
  height: 87px;
  padding: 32px 0 0 34px;
  font-size: 26px;
  font-weight: 700;
}

.side-foot {
  flex: none;
  display: flex;
  justify-content: space-between;
  align-items: center;
  height: 70px;
  margin: 0 40px 0 34px;
  padding: 4px 48px 0;
  border-top: 2px solid #55565a;
}
.side-foot svg { width: 32px; height: 30px; fill: #f4f4f4; }

/* Main column */
.main {
  flex: 1;
  min-width: 0;
  display: flex;
  flex-direction: column;
}

.topbar {
  flex: none;
  display: flex;
  align-items: center;
  height: 74px;
  padding: 0 61px 8px 32px;
  background: #fff;
  border-bottom: 2px solid #c9c9cb;
}
.burger svg { width: 30px; height: 22px; }
.search {
  display: flex;
  align-items: center;
  width: 387px;
  height: 50px;
  margin-left: 30px;
  padding: 0 10px 0 48px;
  border: 2px solid #c9c9cb;
  border-radius: 6px;
  background: #f4f5f7;
}
.search input {
  flex: 1;
  min-width: 0;
  padding: 0;
  border: 0;
  background: none;
  font: inherit;
}
.search input::placeholder { color: #9b9b9b; opacity: 1; }
.search svg { width: 28px; height: 28px; }

.account { display: flex; align-items: center; margin-left: auto; padding-top: 2px; color: #32363f; }
.bell { position: relative; margin-right: 40px; }
.bell svg { width: 30px; height: 34px; fill: #32363f; }
.alert {
  position: absolute;
  left: 18px;
  top: -10px;
  width: 30px;
  height: 32px;
  border-radius: 16px;
  background: #f80000;
  color: #fff;
  font-size: 24px;
  font-weight: 700;
}
.help {
  width: 30px;
  height: 30px;
  margin-right: 32px;
  border-radius: 50%;
  background: #32363f;
  color: #fff;
  font-size: 24px;
  font-weight: 700;
  line-height: 30px;
}
.plan {
  display: flex;
  flex-direction: column;
  margin-right: 31px;
  line-height: 30px;
  color: #9b9b9b;
}
.user { display: flex; align-items: center; gap: 10px; margin-right: 41px; }
.user svg { width: 16px; height: 8px; fill: #32363f; }
.flag { width: 30px; height: 24px; filter: drop-shadow(0 2px 1px #aaa); }

.toolbar {
  position: relative;
  flex: none;
  display: flex;
  align-items: center;
  gap: 16px;
  height: 128px;
  padding: 0 30px 2px 32px;
  background: #fff;
  border-bottom: 2px solid #cfcfd4;
  box-shadow: 0 8px 30px rgba(0, 0, 0, .1);
}
.btn {
  display: flex;
  align-items: center;
  justify-content: center;
  gap: 14px;
  height: 64px;
  padding: 0 24px 0 30px;
  border: 2px solid #d0d0d6;
  border-radius: 6px;
  background: #fff;
  color: #313234;
  fill: #313234;
}
.btn svg { width: 22px; height: 22px; }
.btn.primary { background: #0d58ff; border-color: #0b49d0; color: #fff; }
.btn.menu { padding: 0 34px 0 24px; }
.btn.menu svg { width: 16px; height: 8px; }
.btn.filter svg { height: 24px; }
.btn.versions { padding: 0 26px; }

.tools { display: flex; gap: 16px; margin-left: auto; }
.toggle { position: relative; display: flex; }
.grid-view, .list-view { display: flex; align-items: center; justify-content: center; height: 64px; }
.grid-view { width: 64px; background: #0d58ff; box-shadow: inset 0 6px 8px #062a7c; }
.grid-view svg { width: 22px; height: 22px; fill: #fff; }
.list-view { width: 62px; border: 2px solid #d0d0d6; border-left: 0; border-radius: 0 6px 6px 0; }
.list-view svg { width: 24px; height: 16px; }
.marker {
  position: absolute;
  left: -6px;
  top: -8px;
  width: 80px;
  height: 78px;
  border: 10px solid #ff594b;
  box-shadow: 0 5px 6px rgba(0, 0, 0, .6);
}

/* Folders and plan cards */
.content {
  flex: 1;
  min-height: 0;
  overflow: hidden;
  padding: 32px 30px 0 36px;
}
.folder { margin-bottom: 50px; }
.folder-head { display: flex; align-items: flex-start; line-height: 40px; margin-bottom: 23px; }
.folder-head input {
  appearance: none;
  width: 32px;
  height: 32px;
  margin: 4px 15px 0 0;
  border: 2px solid #dedede;
  border-radius: 6px;
  background: #fff;
}
.folder-icon { width: 32px; height: 26px; margin: 7px 11px 0 0; fill: #3c3c3e; }
.drop {
  display: flex;
  align-items: center;
  justify-content: center;
  width: 44px;
  height: 44px;
  margin-left: 27px;
  border: 2px solid #d0d0d6;
  border-radius: 6px;
  background: #fff;
}
.drop svg { width: 20px; height: 10px; fill: #313234; }

.cards {
  display: grid;
  grid-template-columns: repeat(auto-fill, 344px);
  gap: 20px;
  padding-left: 40px;
}
.card {
  position: relative;
  height: 258px;
  border: 2px solid #c4c4c6;
  background: #fff;
  box-shadow: 0 3px 6px rgba(0, 0, 0, .14);
}
.thumb { width: 100%; height: 176px; }
.name {
  display: block;
  height: 78px;
  border-top: 2px solid #d9d9d9;
  font-weight: 700;
  line-height: 78px;
  text-align: center;
}
.badge {
  position: absolute;
  top: 10px;
  right: 10px;
  width: 40px;
  height: 40px;
  border: 2px solid #3b78ff;
  border-radius: 50%;
  background: #6496ff;
  color: #fff;
  font-size: 24px;
  line-height: 38px;
  text-align: center;
}
.card-new {
  height: 258px;
  border: 4px dashed #c9c9c9;
  color: #bdbdbd;
  font-weight: 700;
}

.status {
  flex: none;
  height: 71px;
  margin: 0 32px;
  padding: 22px 20px 0;
  border-top: 2px solid #c9cacd;
}

.scrolltrack {
  flex: none;
  width: 18px;
  padding-left: 6px;
  border-left: 2px solid #e7e7e8;
  background: #fafafa;
}
.scrollthumb { height: 53.5%; border-radius: 10px 0 0 10px; background: #c1c1c1; }

.shade {
  position: absolute;
  inset: auto 0 0 0;
  height: 90px;
  background: linear-gradient(transparent, rgba(0, 0, 0, .09));
  pointer-events: none;
}
.pointer { position: absolute; top: 0; right: 118px; width: 24px; height: 34px; filter: drop-shadow(0 2px 2px #999); }
```
